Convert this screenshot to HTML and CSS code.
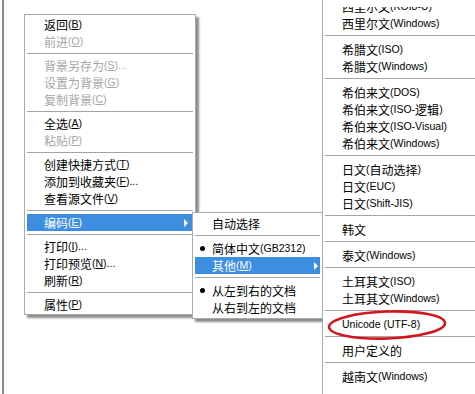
FILE: index.html
```html
<!DOCTYPE html>
<html lang="zh-CN">
<head>
<meta charset="utf-8">
<title>编码菜单</title>
<link rel="stylesheet" href="styles.css">
</head>
<body>
<div class="screen">
  <div class="frame"></div>

  <div class="menu main">
    <div class="item">返回<span class="en">(<u>B</u>)</span></div>
    <div class="item off">前进<span class="en">(<u>O</u>)</span></div>
    <div class="sep"></div>
    <div class="item off">背景另存为<span class="en">(<u>S</u>)...</span></div>
    <div class="item off">设置为背景<span class="en">(<u>G</u>)</span></div>
    <div class="item off">复制背景<span class="en">(<u>C</u>)</span></div>
    <div class="sep"></div>
    <div class="item">全选<span class="en">(<u>A</u>)</span></div>
    <div class="item off">粘贴<span class="en">(<u>P</u>)</span></div>
    <div class="sep"></div>
    <div class="item">创建快捷方式<span class="en">(<u>T</u>)</span></div>
    <div class="item">添加到收藏夹<span class="en">(<u>F</u>)...</span></div>
    <div class="item">查看源文件<span class="en">(<u>V</u>)</span></div>
    <div class="sep"></div>
    <div class="item hl">编码<span class="en">(<u>E</u>)</span><span class="arrow"></span></div>
    <div class="sep"></div>
    <div class="item">打印<span class="en">(<u>I</u>)...</span></div>
    <div class="item">打印预览<span class="en">(<u>N</u>)...</span></div>
    <div class="item">刷新<span class="en">(<u>R</u>)</span></div>
    <div class="sep"></div>
    <div class="item">属性<span class="en">(<u>P</u>)</span></div>
  </div>

  <div class="menu sub">
    <div class="item">自动选择</div>
    <div class="sep"></div>
    <div class="item radio">简体中文<span class="en">(GB2312)</span></div>
    <div class="item hl">其他<span class="en">(<u>M</u>)</span><span class="arrow"></span></div>
    <div class="sep"></div>
    <div class="item radio">从左到右的文档</div>
    <div class="item">从右到左的文档</div>
  </div>

  <div class="menu third">
    <div class="viewport">
      <div class="list">
        <div class="item">西里尔文<span class="en">(KOI8-U)</span></div>
        <div class="item">西里尔文<span class="en">(Windows)</span></div>
        <div class="sep"></div>
        <div class="item">希腊文<span class="en">(ISO)</span></div>
        <div class="item">希腊文<span class="en">(Windows)</span></div>
        <div class="sep"></div>
        <div class="item">希伯来文<span class="en">(DOS)</span></div>
        <div class="item">希伯来文<span class="en">(ISO-</span>逻辑<span class="en">)</span></div>
        <div class="item">希伯来文<span class="en">(ISO-Visual)</span></div>
        <div class="item">希伯来文<span class="en">(Windows)</span></div>
        <div class="sep"></div>
        <div class="item">日文<span class="en">(</span>自动选择<span class="en">)</span></div>
        <div class="item">日文<span class="en">(EUC)</span></div>
        <div class="item">日文<span class="en">(Shift-JIS)</span></div>
        <div class="sep"></div>
        <div class="item">韩文</div>
        <div class="sep"></div>
        <div class="item">泰文<span class="en">(Windows)</span></div>
        <div class="sep"></div>
        <div class="item">土耳其文<span class="en">(ISO)</span></div>
        <div class="item">土耳其文<span class="en">(Windows)</span></div>
        <div class="sep"></div>
        <div class="item"><span class="en">Unicode (UTF-8)</span></div>
        <div class="sep"></div>
        <div class="item">用户定义的</div>
        <div class="sep"></div>
        <div class="item">越南文<span class="en">(Windows)</span></div>
      </div>
    </div>
  </div>

  <svg class="circle" width="124" height="36" viewBox="0 0 124 36" aria-hidden="true">
    <ellipse cx="62" cy="18" rx="58" ry="13.5" transform="rotate(-2 62 18)" fill="none" stroke="#d3161d" stroke-width="2.6"/>
  </svg>
</div>
</body>
</html>
```

FILE: styles.css
```css
html, body {
  margin: 0;
  padding: 0;
  background: #fff;
}

body {
  width: 475px;
  height: 394px;
  overflow: hidden;
  font-family: "Noto Sans CJK SC", sans-serif;
  font-size: 12px;
  color: #000;
}

.screen {
  position: relative;
  width: 475px;
  height: 394px;
  display: flex;
}

.frame {
  width: 2px;
  margin-left: 2px;
  height: 100%;
  background: #8a8a8a;
}

.menu {
  position: absolute;
  box-sizing: border-box;
  background: #fff;
  border: 1px solid #a9a9a9;
}

.main {
  left: 24px;
  top: 14px;
  width: 172px;
  padding: 1px 2px;
  box-shadow: 3px 3px 2px rgba(0, 0, 0, 0.45);
  z-index: 1;
}

.sub {
  left: 192px;
  top: 212px;
  width: 131px;
  padding: 2px;
  box-shadow: 3px 3px 2px rgba(0, 0, 0, 0.45);
  z-index: 2;
}

.third {
  left: 322px;
  top: 0;
  width: 170px;
  height: 394px;
  border-width: 0 0 0 1px;
  padding: 7px 0 0 2px;
  z-index: 3;
}

.viewport {
  height: 100%;
  overflow: hidden;
}

.list {
  margin-top: -9px;
}

.item {
  display: flex;
  align-items: center;
  height: 17px;
  line-height: 17px;
  white-space: nowrap;
}

.item::before {
  content: "";
  flex: 0 0 17px;
  height: 5px;
}

.radio::before {
  flex: 0 0 5px;
  margin: 0 7px 0 5px;
  border-radius: 50%;
  background: #000;
}

.en {
  font-family: "Liberation Sans", sans-serif;
  font-size: 10.5px;
}

.off {
  color: #a7a6a2;
}

.hl {
  background: #3d8ee0;
  color: #fff;
}

.arrow {
  margin-left: auto;
  margin-right: 5px;
  width: 0;
  height: 0;
  border-left: 4px solid currentColor;
  border-top: 4px solid transparent;
  border-bottom: 4px solid transparent;
}

.sub .arrow {
  margin-right: 2px;
}

.sep {
  box-sizing: border-box;
  height: 7px;
  padding-top: 3px;
}

.sep::after {
  content: "";
  display: block;
  height: 1px;
  background: #a3a3a3;
}

.sub .sep {
  height: 8px;
}

.third .sep {
  height: 9px;
}

.circle {
  position: absolute;
  left: 325px;
  top: 307px;
  z-index: 4;
}
```
